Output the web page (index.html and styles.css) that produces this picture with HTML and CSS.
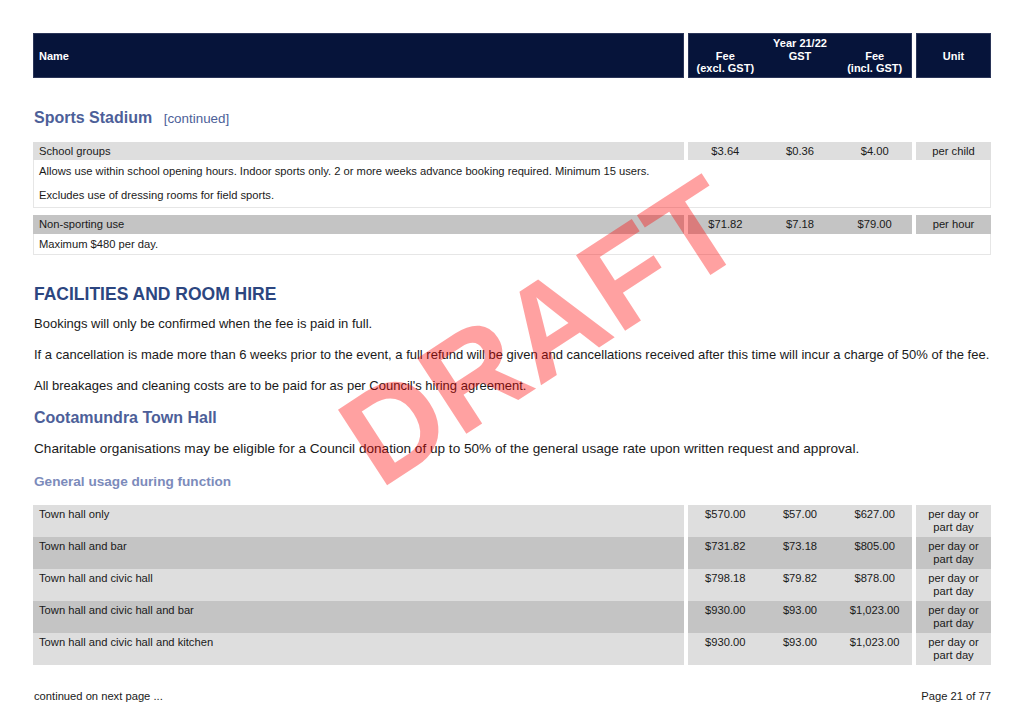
FILE: index.html
```html
<!DOCTYPE html>
<html>
<head>
<meta charset="utf-8">
<link rel="stylesheet" href="styles.css">
</head>
<body>
<div class="page">
  <div class="thead">
    <div class="th th-name">Name</div>
    <div class="th th-year">
      <div class="year">Year 21/22</div>
      <div class="year-cols">
        <div>Fee<br>(excl. GST)</div>
        <div>GST</div>
        <div>Fee<br>(incl. GST)</div>
      </div>
    </div>
    <div class="th th-unit">Unit</div>
  </div>

  <h2 class="sub">Sports Stadium <span class="cont">[continued]</span></h2>

  <div class="group">
    <div class="row light">
      <div class="c-name">School groups</div>
      <div class="c-fees"><span>$3.64</span><span>$0.36</span><span>$4.00</span></div>
      <div class="c-unit">per child</div>
    </div>
    <div class="desc">
      <div class="desc-line">Allows use within school opening hours. Indoor sports only. 2 or more weeks advance booking required. Minimum 15 users.</div>
      <div class="desc-line">Excludes use of dressing rooms for field sports.</div>
    </div>
  </div>

  <div class="group">
    <div class="row dark">
      <div class="c-name">Non-sporting use</div>
      <div class="c-fees"><span>$71.82</span><span>$7.18</span><span>$79.00</span></div>
      <div class="c-unit">per hour</div>
    </div>
    <div class="desc">
      <div class="desc-line short">Maximum $480 per day.</div>
    </div>
  </div>

  <h1 class="main">FACILITIES AND ROOM HIRE</h1>
  <p class="para">Bookings will only be confirmed when the fee is paid in full.</p>
  <p class="para">If a cancellation is made more than 6 weeks prior to the event, a full refund will be given and cancellations received after this time will incur a charge of 50% of the fee.</p>
  <p class="para">All breakages and cleaning costs are to be paid for as per Council's hiring agreement.</p>

  <h2 class="sub sub2">Cootamundra Town Hall</h2>
  <p class="para para2">Charitable organisations may be eligible for a Council donation of up to 50% of the general usage rate upon written request and approval.</p>

  <h3 class="minor">General usage during function</h3>

  <div class="table2">
    <div class="row2 light">
      <div class="c-name">Town hall only</div>
      <div class="c-fees"><span>$570.00</span><span>$57.00</span><span>$627.00</span></div>
      <div class="c-unit">per day or<br>part day</div>
    </div>
    <div class="row2 dark">
      <div class="c-name">Town hall and bar</div>
      <div class="c-fees"><span>$731.82</span><span>$73.18</span><span>$805.00</span></div>
      <div class="c-unit">per day or<br>part day</div>
    </div>
    <div class="row2 light">
      <div class="c-name">Town hall and civic hall</div>
      <div class="c-fees"><span>$798.18</span><span>$79.82</span><span>$878.00</span></div>
      <div class="c-unit">per day or<br>part day</div>
    </div>
    <div class="row2 dark">
      <div class="c-name">Town hall and civic hall and bar</div>
      <div class="c-fees"><span>$930.00</span><span>$93.00</span><span>$1,023.00</span></div>
      <div class="c-unit">per day or<br>part day</div>
    </div>
    <div class="row2 light">
      <div class="c-name">Town hall and civic hall and kitchen</div>
      <div class="c-fees"><span>$930.00</span><span>$93.00</span><span>$1,023.00</span></div>
      <div class="c-unit">per day or<br>part day</div>
    </div>
  </div>

  <div class="footer">
    <span>continued on next page ...</span>
    <span>Page 21 of 77</span>
  </div>

  <div class="watermark">DRAFT</div>
</div>
</body>
</html>
```

FILE: styles.css
```css
* { box-sizing: border-box; }
html, body { margin: 0; padding: 0; background: #fff; }
body {
  font-family: "Liberation Sans", Arial, sans-serif;
  color: #1a1a1a;
}
.page {
  position: relative;
  width: 1024px;
  height: 717px;
  padding: 33px 33px 0 33px;
  overflow: hidden;
}
.thead {
  display: grid;
  grid-template-columns: 651px 224px 75px;
  column-gap: 4px;
  height: 45px;
}
.th {
  background: #06143a;
  color: #fff;
  font-weight: bold;
  font-size: 11px;
  box-shadow: inset 0 0 0 1px #2a3558;
}
.th-name {
  display: flex;
  align-items: center;
  padding-left: 6px;
}
.th-year {
  text-align: center;
  padding-top: 4px;
  line-height: 12.5px;
}
.year-cols {
  display: grid;
  grid-template-columns: 1fr 1fr 1fr;
}
.th-unit {
  display: flex;
  align-items: center;
  justify-content: center;
}

.sub {
  margin: 30px 0 0 1px;
  font-size: 16px;
  line-height: 20px;
  color: #4d5f99;
  font-weight: bold;
}
.cont {
  font-weight: normal;
  font-size: 13.4px;
  margin-left: 7px;
}

.group { margin-top: 13px; }
.group + .group { margin-top: 7px; }
.row {
  display: grid;
  grid-template-columns: 651px 224px 75px;
  column-gap: 4px;
  font-size: 11.2px;
  line-height: 18px;
}
.row.dark { line-height: 19px; }
.light > div { background: #dedede; }
.dark > div { background: #c4c4c4; }
.c-name { padding-left: 6px; }
.c-fees {
  display: grid;
  grid-template-columns: 1fr 1fr 1fr;
  text-align: center;
}
.c-unit { text-align: center; }
.desc {
  border: 1px solid #e6e6e6;
  border-top: none;
  font-size: 11.2px;
}
.desc-line {
  line-height: 23.5px;
  padding-left: 5px;
}
.desc-line.short { line-height: 20px; }

.main {
  margin: 29px 0 0 1px;
  font-size: 17.5px;
  line-height: 20px;
  color: #2c4680;
  font-weight: bold;
}
.para {
  margin: 15px 0 0 1px;
  font-size: 13px;
  line-height: 16px;
  color: #1a1a1a;
}
.main + .para { margin-top: 12px; }
.sub2 { margin-top: 14px; }
.para2 { margin-top: 13px; font-size: 13.6px; }
.minor {
  margin: 17px 0 0 1px;
  font-size: 13.6px;
  line-height: 16px;
  color: #7c8bbb;
  font-weight: bold;
}

.table2 { margin-top: 15px; }
.row2 {
  display: grid;
  grid-template-columns: 651px 224px 75px;
  column-gap: 4px;
  font-size: 11.2px;
  line-height: 12.5px;
  height: 32px;
}
.row2 > div { padding-top: 3px; }

.footer {
  display: flex;
  justify-content: space-between;
  margin-top: 24px;
  font-size: 11.2px;
  line-height: 14px;
  padding-left: 1px;
}

.watermark {
  position: absolute;
  left: 541px;
  top: 331px;
  transform: translate(-50%, -50%) rotate(-33deg);
  font-size: 131px;
  font-weight: bold;
  line-height: 1;
  color: rgba(255, 0, 0, 0.37);
  white-space: nowrap;
  pointer-events: none;
}
```
